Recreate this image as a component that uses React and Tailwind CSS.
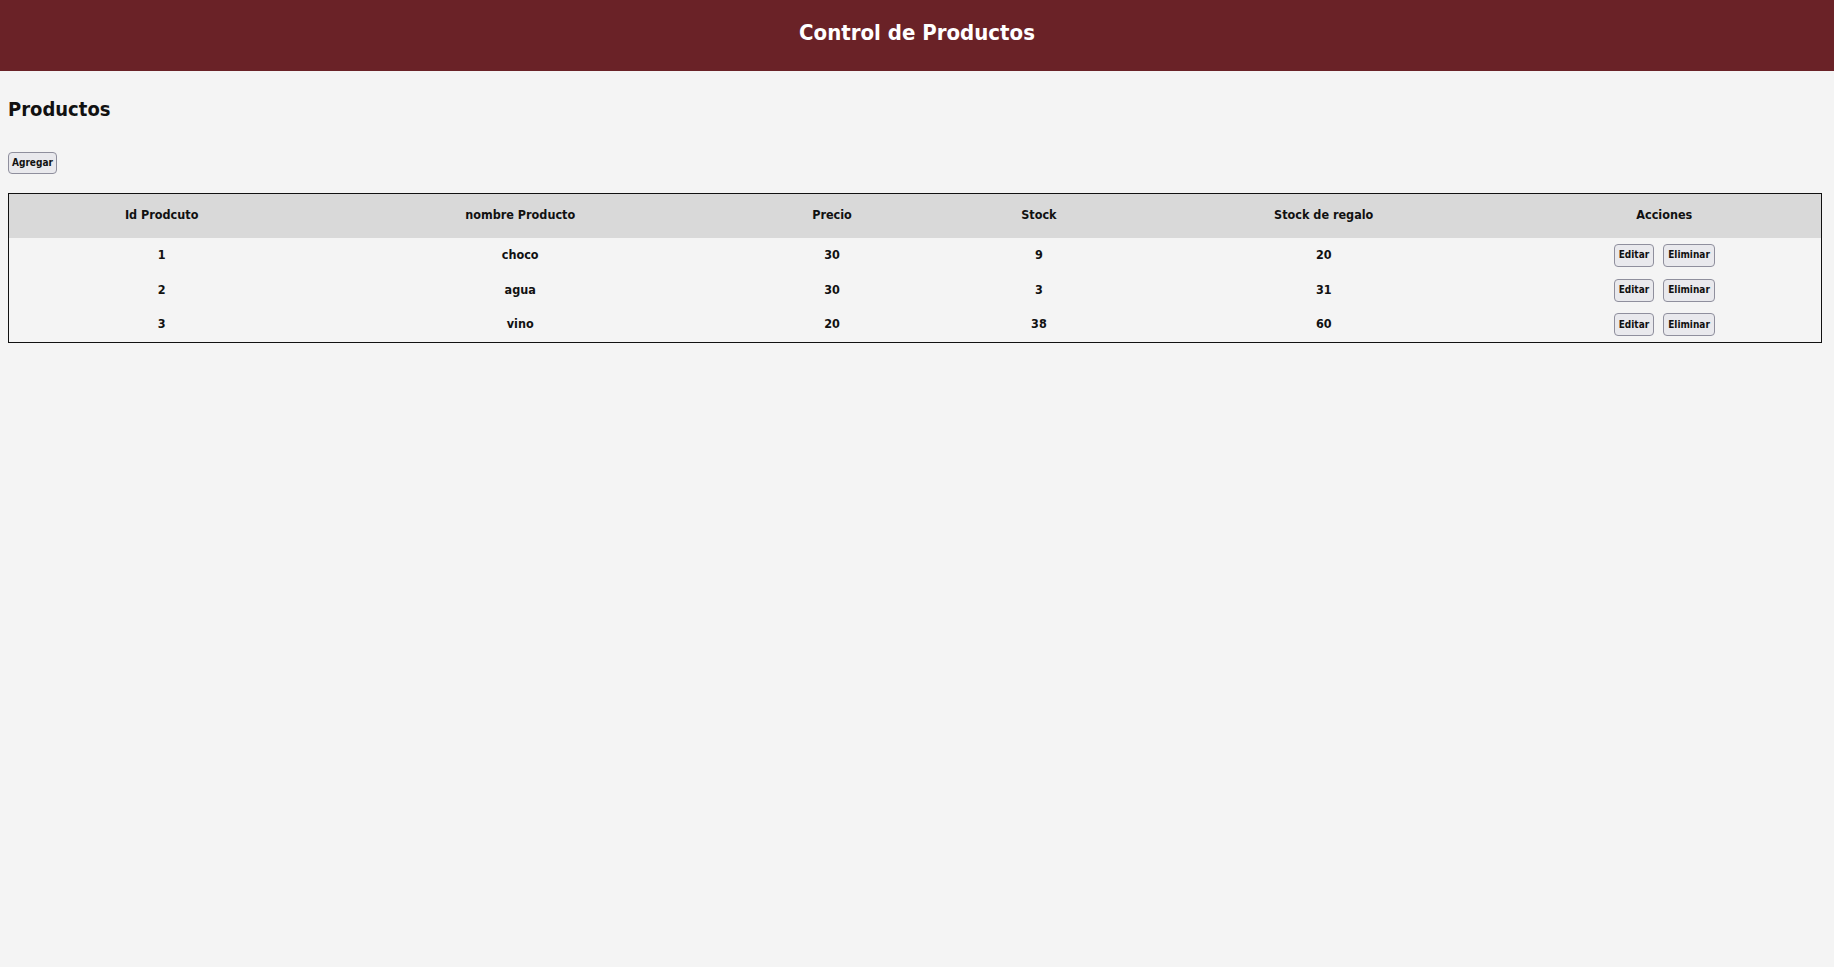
const productos = [
    { id: 1, nombre: 'choco', precio: 30, stock: 9, regalo: 20 },
    { id: 2, nombre: 'agua', precio: 30, stock: 3, regalo: 31 },
    { id: 3, nombre: 'vino', precio: 20, stock: 38, regalo: 60 },
];

const font = { fontFamily: '"Liberation Sans Narrow", "DejaVu Sans Condensed", "Liberation Sans", sans-serif' };

function Boton({ children }) {
    return (
        <button type="button" className="h-[23px] px-[4px] rounded-[4px] border border-[#8f8f9d] bg-[#e9e9ed] text-[10px] font-bold text-[#111] leading-none">
            {children}
        </button>
    );
}

export default function App() {
    return (
        <div className="min-h-screen bg-[#f4f4f4] text-[#111]" style={font}>
            <header className="h-[71px] bg-[#6a2227] flex items-center justify-center pb-[6px]">
                <h1 className="text-[22px] font-bold text-white">Control de Productos</h1>
            </header>

            <main className="px-2">
                <h2 className="text-[20px] font-bold mt-[28px] leading-none">Productos</h2>

                <button type="button" className="mt-[33px] h-[22px] px-[3px] rounded-[4px] border border-[#8f8f9d] bg-[#e9e9ed] text-[10px] font-bold leading-none">
                    Agregar
                </button>

                <table className="mt-[19px] w-[1814px] border border-[#111] border-collapse text-[12.5px] font-bold">
                    <thead>
                        <tr className="bg-[#d9d9d9] h-[44px]">
                            <th className="w-[306px]">Id Prodcuto</th>
                            <th className="w-[412px]">nombre Producto</th>
                            <th className="w-[212px]">Precio</th>
                            <th className="w-[202px]">Stock</th>
                            <th className="w-[368px]">Stock de regalo</th>
                            <th className="w-[314px]">Acciones</th>
                        </tr>
                    </thead>
                    <tbody>
                        {productos.map((p) => (
                            <tr className="h-[35px] text-center" key={p.id}>
                                <td>{p.id}</td>
                                <td>{p.nombre}</td>
                                <td>{p.precio}</td>
                                <td>{p.stock}</td>
                                <td>{p.regalo}</td>
                                <td>
                                    <div className="flex justify-center gap-[9px]">
                                        <Boton>Editar</Boton>
                                        <Boton>Eliminar</Boton>
                                    </div>
                                </td>
                            </tr>
                        ))}
                    </tbody>
                </table>
            </main>
        </div>
    );
}
